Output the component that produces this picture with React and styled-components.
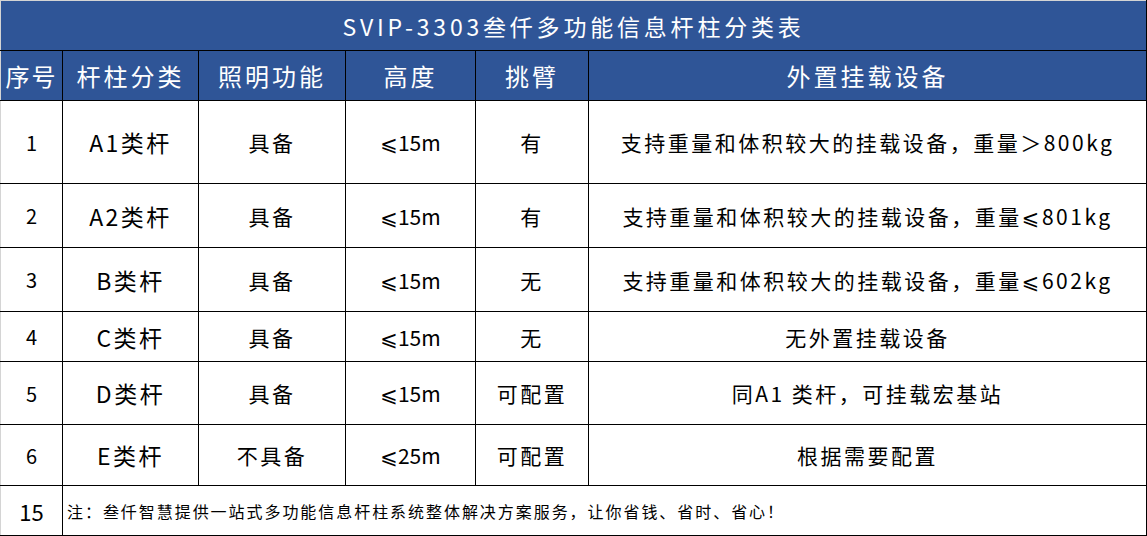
import React from "react";
import styled, { createGlobalStyle } from "styled-components";

const GlobalStyle = createGlobalStyle`
  html, body {
    margin: 0;
    padding: 0;
    background: #ffffff;
  }
  body {
    font-family: "Noto Sans CJK SC", "DejaVu Sans", sans-serif;
  }
`;

const Sheet = styled.table`
  border-collapse: collapse;
  table-layout: fixed;
  width: 1146px;
  font-family: "Noto Sans CJK SC", "DejaVu Sans", sans-serif;
  color: #000;
`;

const Row = styled.tr`
  height: ${(props) => props.$h}px;
`;

const TitleCell = styled.td`
  background: #2f5597;
  color: #fff;
  font-size: 23px;
  letter-spacing: 3.8px;
  text-align: center;
  padding: 0;
  border-top: 1px solid #d4d4d4;
  border-left: 1px solid #d4d4d4;
  border-right: 1px solid #000;
  border-bottom: 1px solid #000;
`;

const HeadCell = styled.th`
  background: #2f5597;
  color: #fff;
  font-weight: 400;
  font-size: 24px;
  letter-spacing: ${(props) => (props.$tight ? 2 : 3)}px;
  text-align: center;
  padding: 0;
  border: 1px solid #000;
  &:first-child {
    border-left-color: #d4d4d4;
  }
`;

const Cell = styled.td`
  font-size: ${(props) => props.$size || 21}px;
  letter-spacing: ${(props) => (props.$spacing !== undefined ? props.$spacing : 2.5)}px;
  text-align: ${(props) => props.$align || "center"};
  padding: 0 ${(props) => (props.$align === "left" ? 4 : 0)}px;
  border: 1px solid #000;
  white-space: nowrap;
  &:first-child {
    border-left-color: #d4d4d4;
  }
`;

const columns = [62, 136, 147, 130, 113, 558];

const rows = [
  { no: 1, type: "A1类杆", light: "具备", height: "⩽15m", arm: "有", mount: "支持重量和体积较大的挂载设备，重量＞800kg", h: 83 },
  { no: 2, type: "A2类杆", light: "具备", height: "⩽15m", arm: "有", mount: "支持重量和体积较大的挂载设备，重量⩽801kg", h: 64 },
  { no: 3, type: "B类杆", light: "具备", height: "⩽15m", arm: "无", mount: "支持重量和体积较大的挂载设备，重量⩽602kg", h: 64 },
  { no: 4, type: "C类杆", light: "具备", height: "⩽15m", arm: "无", mount: "无外置挂载设备", h: 50 },
  { no: 5, type: "D类杆", light: "具备", height: "⩽15m", arm: "可配置", mount: "同A1 类杆，可挂载宏基站", h: 63 },
  { no: 6, type: "E类杆", light: "不具备", height: "⩽25m", arm: "可配置", mount: "根据需要配置", h: 61 },
];

export default function App() {
  return (
    <>
      <GlobalStyle />
      <Sheet>
        <colgroup>
          {columns.map((w, i) => (
            <col key={i} style={{ width: w }} />
          ))}
        </colgroup>
        <thead>
          <Row $h={50}>
            <TitleCell colSpan={6}>SVIP-3303叁仟多功能信息杆柱分类表</TitleCell>
          </Row>
          <Row $h={50}>
            <HeadCell $tight>序号</HeadCell>
            <HeadCell>杆柱分类</HeadCell>
            <HeadCell>照明功能</HeadCell>
            <HeadCell>高度</HeadCell>
            <HeadCell>挑臂</HeadCell>
            <HeadCell>外置挂载设备</HeadCell>
          </Row>
        </thead>
        <tbody>
          {rows.map((r) => (
            <Row key={r.no} $h={r.h}>
              <Cell $size={20} $spacing={0}>{r.no}</Cell>
              <Cell $size={23}>{r.type}</Cell>
              <Cell>{r.light}</Cell>
              <Cell $spacing={0}>{r.height}</Cell>
              <Cell>{r.arm}</Cell>
              <Cell>{r.mount}</Cell>
            </Row>
          ))}
          <Row $h={50}>
            <Cell $size={22} $spacing={0}>15</Cell>
            <Cell colSpan={5} $align="left" $size={16} $spacing={1.95}>
              注：叁仟智慧提供一站式多功能信息杆柱系统整体解决方案服务，让你省钱、省时、省心！
            </Cell>
          </Row>
        </tbody>
      </Sheet>
    </>
  );
}
